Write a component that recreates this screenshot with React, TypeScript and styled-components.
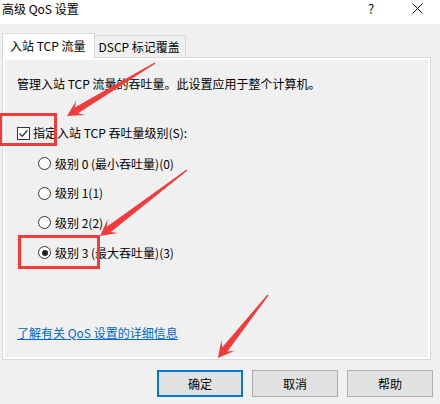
import React from "react";
import styled, { createGlobalStyle } from "styled-components";

const Global = createGlobalStyle`
  html, body { margin: 0; padding: 0; background: #f0f0f0; }
  body { font-family: "Noto Sans CJK SC", "Noto Sans", sans-serif; font-size: 12px; color: #000; }
  * { box-sizing: border-box; }
`;

const Window = styled.div`
  position: relative;
  width: 440px;
  height: 404px;
  background: #f0f0f0;
  overflow: hidden;
  display: flex;
  flex-direction: column;
`;

const TitleBar = styled.div`
  height: 24px;
  background: #fff;
  display: flex;
  align-items: flex-start;
  flex-shrink: 0;
`;

const Title = styled.div`
  padding: 1px 0 0 2px;
  line-height: 16px;
  font-size: 12px;
  flex: 1;
`;

const CaptionButton = styled.div`
  width: 46px;
  height: 17px;
  display: flex;
  align-items: center;
  justify-content: center;
  font-size: 13px;
  line-height: 17px;
  color: #111;
`;

const Body = styled.div`
  padding: 9px 9px 0 2px;
  display: flex;
  flex-direction: column;
`;

const TabRow = styled.div`
  display: flex;
  align-items: flex-end;
  position: relative;
  z-index: 1;
`;

const Tab = styled.div<{ $active?: boolean }>`
  height: ${(p) => (p.$active ? 25 : 22)}px;
  margin-bottom: ${(p) => (p.$active ? -1 : 0)}px;
  padding: 0 ${(p) => (p.$active ? 8 : 5)}px 0 ${(p) => (p.$active ? 7 : 4)}px;
  background: ${(p) => (p.$active ? "#fff" : "#f0f0f0")};
  border: 1px solid #d9d9d9;
  border-bottom: none;
  border-left: ${(p) => (p.$active ? "1px solid #d9d9d9" : "none")};
  display: flex;
  align-items: center;
  line-height: 16px;
  white-space: nowrap;
`;

const Panel = styled.div`
  height: 303px;
  border: 1px solid #d9d9d9;
  box-shadow: inset 0 0 0 2px #fff;
  background: #f0f0f0;
  padding: 18px 14px 18px 14px;
  display: flex;
  flex-direction: column;
`;

const Text = styled.div`
  line-height: 16px;
  white-space: nowrap;
`;

const CheckRow = styled.label`
  margin-top: 33px;
  display: flex;
  align-items: center;
  gap: 3px;
  line-height: 16px;
  white-space: nowrap;
`;

const Box = styled.span`
  width: 13px;
  height: 13px;
  border: 1px solid #333;
  background: #fff;
  display: flex;
  align-items: center;
  justify-content: center;
`;

const RadioGroup = styled.div`
  margin: 14.5px 0 0 21px;
  display: flex;
  flex-direction: column;
  gap: 13.7px;
`;

const RadioRow = styled.label`
  display: flex;
  align-items: center;
  gap: 4px;
  height: 16px;
  line-height: 16px;
  white-space: nowrap;
`;

const Circle = styled.span<{ $on?: boolean }>`
  width: 13px;
  height: 13px;
  border-radius: 50%;
  border: 1px solid #333;
  background: #fff;
  display: flex;
  align-items: center;
  justify-content: center;
  &::after {
    content: "";
    width: 6px;
    height: 6px;
    border-radius: 50%;
    background: #222;
    display: ${(p) => (p.$on ? "block" : "none")};
  }
`;

const Link = styled.a`
  margin-top: auto;
  line-height: 16px;
  color: #0066cc;
  text-decoration: underline;
  white-space: nowrap;
  align-self: flex-start;
`;

const ButtonRow = styled.div`
  display: flex;
  justify-content: flex-end;
  gap: 9px;
  margin: 10px -2px 0 0;
`;

const Button = styled.div<{ $default?: boolean }>`
  width: 86px;
  height: 27px;
  background: #e1e1e1;
  border: ${(p) => (p.$default ? "2px solid #0078d7" : "1px solid #adadad")};
  display: flex;
  align-items: center;
  justify-content: center;
  line-height: 16px;
`;

const Overlay = styled.svg`
  position: absolute;
  left: 0;
  top: 0;
  pointer-events: none;
`;

function arrow(tx: number, ty: number, px: number, py: number): string {
  const dx = px - tx;
  const dy = py - ty;
  const len = Math.hypot(dx, dy);
  const ux = dx / len;
  const uy = dy / len;
  const nx = -uy;
  const ny = ux;
  const at = (d: number, w: number) =>
    `${(px - ux * d + nx * w).toFixed(1)},${(py - uy * d + ny * w).toFixed(1)}`;
  return [
    at(len, 0.7),
    at(11, 3.3),
    at(16, 8.5),
    `${px},${py}`,
    at(16, -8.5),
    at(11, -3.3),
    at(len, -0.7),
  ].join(" ");
}

const RED = "#f23b3b";

export default function App() {
  return (
    <>
      <Global />
      <Window>
        <TitleBar>
          <Title>高级 QoS 设置</Title>
          <CaptionButton>?</CaptionButton>
          <CaptionButton>
            <svg width="11" height="11" viewBox="0 0 11 11">
              <path d="M0.5 0.5 L10.5 10.5 M10.5 0.5 L0.5 10.5" stroke="#111" strokeWidth="1" fill="none" />
            </svg>
          </CaptionButton>
        </TitleBar>
        <Body>
          <TabRow>
            <Tab $active>入站 TCP 流量</Tab>
            <Tab>DSCP 标记覆盖</Tab>
          </TabRow>
          <Panel>
            <Text>管理入站 TCP 流量的吞吐量。此设置应用于整个计算机。</Text>
            <CheckRow>
              <Box>
                <svg width="11" height="11" viewBox="0 0 11 11">
                  <polyline points="1.5,5.5 4.2,8.3 9.5,2.2" stroke="#333" strokeWidth="1.3" fill="none" />
                </svg>
              </Box>
              指定入站 TCP 吞吐量级别(S):
            </CheckRow>
            <RadioGroup>
              <RadioRow><Circle />级别 0 (最小吞吐量)(0)</RadioRow>
              <RadioRow><Circle />级别 1(1)</RadioRow>
              <RadioRow><Circle />级别 2(2)</RadioRow>
              <RadioRow><Circle $on />级别 3 (最大吞吐量)(3)</RadioRow>
            </RadioGroup>
            <Link href="#">了解有关 QoS 设置的详细信息</Link>
          </Panel>
          <ButtonRow>
            <Button $default>确定</Button>
            <Button>取消</Button>
            <Button>帮助</Button>
          </ButtonRow>
        </Body>
        <Overlay width="440" height="404" viewBox="0 0 440 404">
          <rect x="0.5" y="114.5" width="55" height="30" fill="none" stroke={RED} strokeWidth="3" />
          <rect x="19.5" y="236.5" width="79" height="31" fill="none" stroke={RED} strokeWidth="3" />
          <polygon points={arrow(155, 63, 67, 116)} fill={RED} />
          <polygon points={arrow(187, 170, 100, 236)} fill={RED} />
          <polygon points={arrow(268, 295, 218, 358)} fill={RED} />
        </Overlay>
      </Window>
    </>
  );
}
